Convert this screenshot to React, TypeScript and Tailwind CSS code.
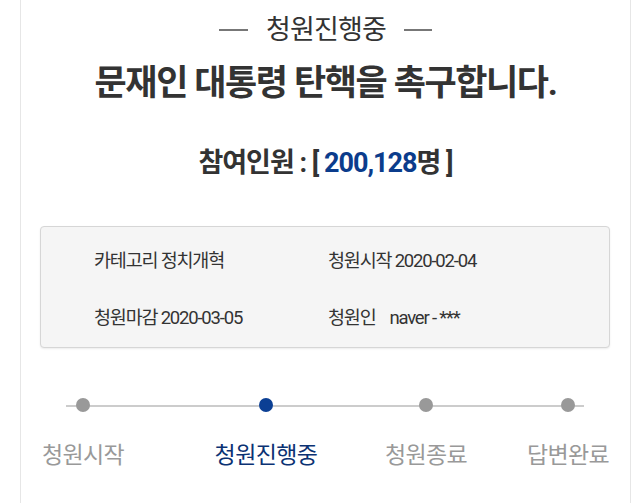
const font = { fontFamily: "Roboto, 'Noto Sans CJK KR', sans-serif" };

const steps = [
  { label: "청원시작", w: "w-[84px]", ml: "ml-0", active: false },
  { label: "청원진행중", w: "w-[106px]", ml: "ml-[88px]", active: true },
  { label: "청원종료", w: "w-[86px]", ml: "ml-[64px]", active: false },
  { label: "답변완료", w: "w-[86px]", ml: "ml-[56px]", active: false },
];

export default function App() {
  return (
    <div className="h-[503px] w-[639px] overflow-hidden bg-white text-[#333]" style={font}>
      <div className="ml-[20px] h-full w-[611px] border-x border-[#e6e6e6]">
        <div className="flex items-center justify-center gap-[18px] pt-[11px] text-[27px] leading-[38px] text-[#333]">
          <span className="h-[2px] w-[29px] bg-[#777]" />
          <span className="tracking-[-0.8px]">청원진행중</span>
          <span className="h-[2px] w-[28px] bg-[#777]" />
        </div>
        <h1 className="mt-[12px] text-center text-[35px] font-bold leading-[46px] tracking-[-1.4px] text-[#333]">
          문재인 대통령 탄핵을 촉구합니다.
        </h1>
        <p className="mt-[36px] text-center text-[27px] font-bold leading-[40px] tracking-[-1px] text-[#333]">
          참여인원 : [ <span className="text-[#0b3c8c]">200,128</span>명 ]
        </p>
        <div className="ml-[19px] mr-[20px] mt-[43px] grid h-[122px] grid-cols-[234px_1fr] content-center gap-y-[30px] rounded-[4px] border border-[#d6d6d6] bg-[#f5f5f5] pl-[53px] pt-[5px] text-[18.5px] leading-[27px] tracking-[-1.2px] text-[#333] shadow-[0_1px_2px_rgba(0,0,0,0.08)]">
          <div>카테고리 정치개혁</div>
          <div>청원시작 2020-02-04</div>
          <div>청원마감 2020-03-05</div>
          <div>
            청원인<span className="ml-[14px]">naver - ***</span>
          </div>
        </div>
        <div className="relative mt-[50px] flex pl-[20px]">
          <div className="absolute left-[45px] top-[7px] h-[2px] w-[518px] bg-[#cccccc]" />
          {steps.map((s) => (
            <div key={s.label} className={`relative flex flex-col items-center ${s.w} ${s.ml}`}>
              <span className={`h-[14px] w-[14px] rounded-full ${s.active ? "bg-[#0b3f94]" : "bg-[#999]"}`} />
              <span
                className={`mt-[28px] whitespace-nowrap text-[23px] leading-[32px] tracking-[-0.6px] ${s.active ? "text-[#0b3273]" : "text-[#999]"}`}
              >
                {s.label}
              </span>
            </div>
          ))}
        </div>
      </div>
    </div>
  );
}
